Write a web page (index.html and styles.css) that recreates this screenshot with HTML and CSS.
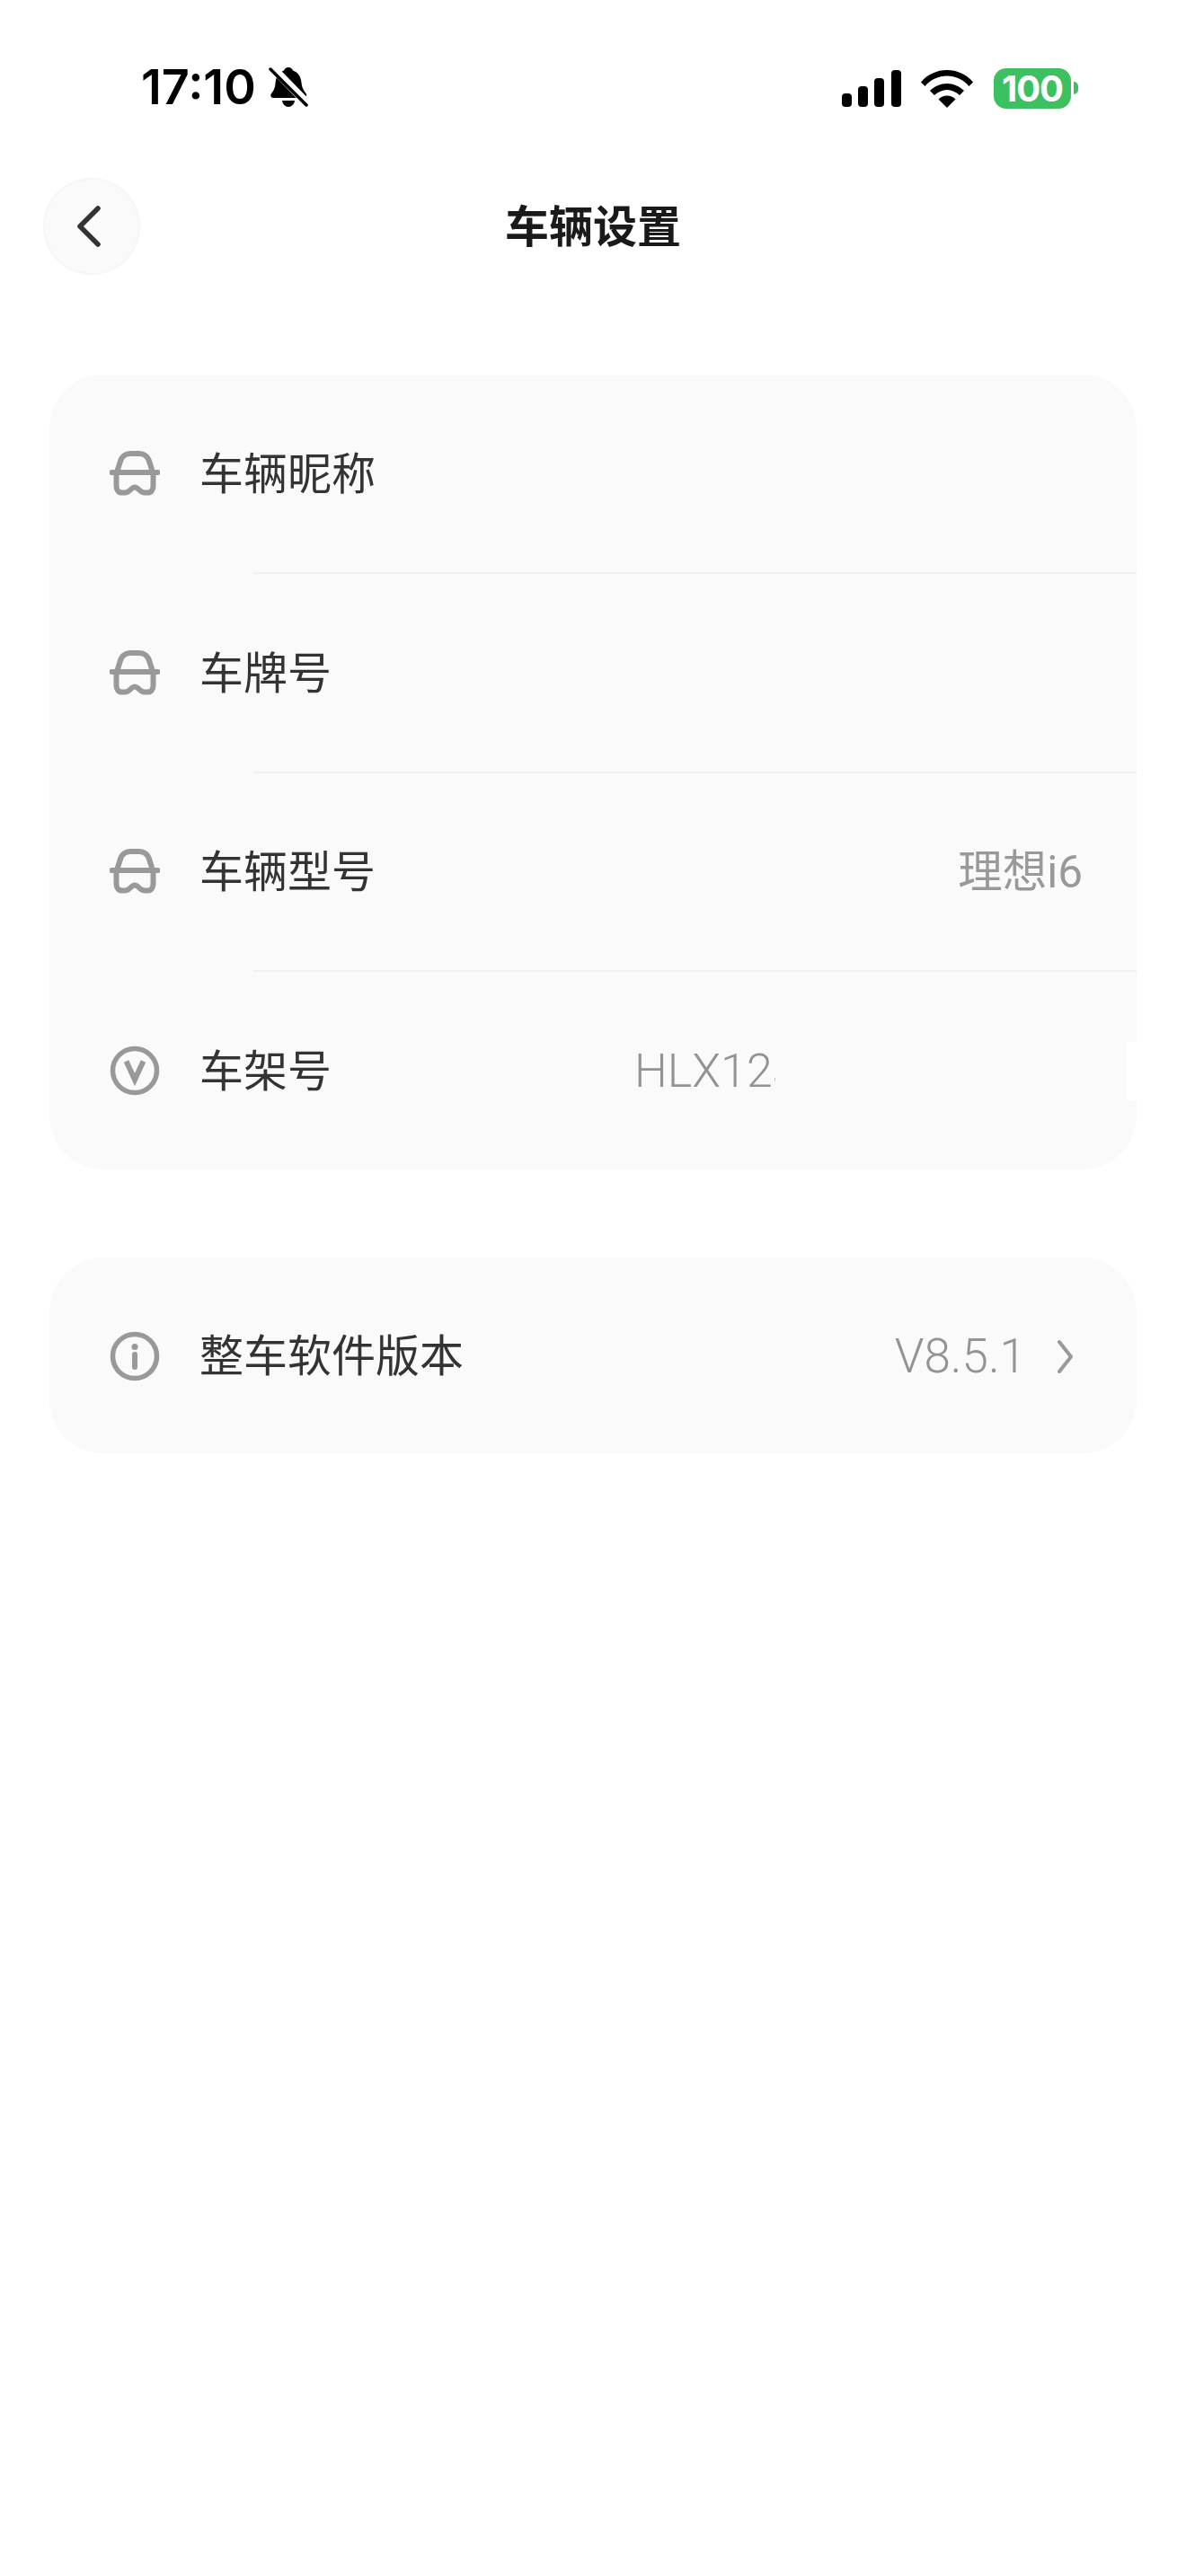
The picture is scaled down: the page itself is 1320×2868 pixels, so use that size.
FILE: index.html
```html
<!DOCTYPE html>
<html lang="zh">
<head>
<meta charset="utf-8">
<title>车辆设置</title>
<link rel="stylesheet" href="styles.css">
</head>
<body>
<div class="status">
  <div class="status-left">
    <span class="time">17:10</span>
    <svg class="bell" viewBox="0 0 44 46" width="44" height="46"><path d="M22 1c3 0 4.500 2 5 3.500C33 6.500 36 12 36.500 18c.4 5 2 8 5 12 1.500 2 .5 5-2 5H5c-2.500 0-3.500-3-2-5 3-3.500 4-6 4.500-11C8 12 11 6.500 17 4.500 17.500 3 19 1 22 1z" fill="#000"/><path d="M15 38h14c-.5 4-3.500 7-7 7s-6.500-3-7-7z" fill="#000"/><path d="M4 1l38 39" stroke="#fff" stroke-width="9"/><path d="M2 3l40 40" stroke="#000" stroke-width="3.500" stroke-linecap="round"/></svg>
  </div>
  <div class="status-right">
    <svg class="signal" viewBox="0 0 66 41" width="66" height="41"><rect x="0" y="26" width="11" height="15" rx="4"/><rect x="18" y="18" width="11" height="23" rx="4"/><rect x="36" y="9" width="11" height="32" rx="4"/><rect x="55" y="0" width="11" height="41" rx="4"/></svg>
    <svg class="wifi" viewBox="0 0 58 42" width="58" height="42"><path d="M0 13.500C7.500 4.500 18 0 29 0s21.500 4.500 29 13.500l-4.500 4.500C47 10.500 38.500 6.500 29 6.500S11 10.500 4.500 18z"/><path d="M10 23c5-5 12-8 19-8s14 3 19 8l-5 5c-4-3.500-9-6-14-6s-10 2.500-14 6z"/><path d="M19.500 32.500c2.500-2.500 6-4 9.500-4s7 1.500 9.500 4L29 42z"/></svg>
    <div class="battery"><span class="battery-body">100</span><span class="battery-nub"></span></div>
  </div>
</div>

<header class="nav">
  <button class="back" type="button" aria-label="返回">
    <svg viewBox="0 0 30 48" width="30" height="48"><path d="M24 4L4 24l20 20" fill="none" stroke="#333" stroke-width="5.500" stroke-linecap="round" stroke-linejoin="round"/></svg>
  </button>
  <h1 class="title">车辆设置</h1>
</header>

<main class="content">
  <section class="card card-main">
    <div class="row">
      <svg class="icon" viewBox="0 0 56 56"><path d="M8 27l3.500-11C13 9 18 6 23 6h10c5 0 10 3 11.500 10L48 27" fill="none" stroke="#999" stroke-width="6"/><path d="M7.500 27v15c0 5 2.500 7.500 6.500 7.500h3c3 0 4.500-1.500 6-3 1.500-1.500 3-3 5-3s3.500 1.500 5 3c1.500 1.500 3 3 6 3h3c4 0 6.500-2.500 6.500-7.500V27" fill="none" stroke="#999" stroke-width="6"/><path d="M2.500 27h51" stroke="#999" stroke-width="6" stroke-linecap="round"/></svg>
      <span class="label">车辆昵称</span>
    </div>
    <div class="divider"></div>
    <div class="row">
      <svg class="icon" viewBox="0 0 56 56"><path d="M8 27l3.500-11C13 9 18 6 23 6h10c5 0 10 3 11.500 10L48 27" fill="none" stroke="#999" stroke-width="6"/><path d="M7.500 27v15c0 5 2.500 7.500 6.500 7.500h3c3 0 4.500-1.500 6-3 1.500-1.500 3-3 5-3s3.500 1.500 5 3c1.500 1.500 3 3 6 3h3c4 0 6.500-2.500 6.500-7.500V27" fill="none" stroke="#999" stroke-width="6"/><path d="M2.500 27h51" stroke="#999" stroke-width="6" stroke-linecap="round"/></svg>
      <span class="label">车牌号</span>
    </div>
    <div class="divider"></div>
    <div class="row">
      <svg class="icon" viewBox="0 0 56 56"><path d="M8 27l3.500-11C13 9 18 6 23 6h10c5 0 10 3 11.500 10L48 27" fill="none" stroke="#999" stroke-width="6"/><path d="M7.500 27v15c0 5 2.500 7.500 6.500 7.500h3c3 0 4.500-1.500 6-3 1.500-1.500 3-3 5-3s3.500 1.500 5 3c1.500 1.500 3 3 6 3h3c4 0 6.500-2.500 6.500-7.500V27" fill="none" stroke="#999" stroke-width="6"/><path d="M2.500 27h51" stroke="#999" stroke-width="6" stroke-linecap="round"/></svg>
      <span class="label">车辆型号</span>
      <span class="value value-right">理想i6</span>
    </div>
    <div class="divider"></div>
    <div class="row">
      <svg class="icon" viewBox="0 0 56 56"><circle cx="28" cy="28" r="24.500" fill="none" stroke="#999" stroke-width="5.500"/><path d="M18.500 17.500L28 38l9.500-20.500" fill="none" stroke="#999" stroke-width="6"/></svg>
      <span class="label">车架号</span>
      <span class="value vin">HLX123456</span>
    </div>
    <span class="mask"></span>
  </section>

  <section class="card card-version">
    <div class="row">
      <svg class="icon icon-info" viewBox="0 0 56 56"><circle cx="28" cy="28" r="24.500" fill="none" stroke="#999" stroke-width="5.500"/><circle cx="28" cy="17.500" r="3.500" fill="#999"/><path d="M28 26v14" stroke="#999" stroke-width="6" stroke-linecap="round"/></svg>
      <span class="label">整车软件版本</span>
      <span class="value version">V8.5.1</span>
      <svg class="chevron" viewBox="0 0 19 39" width="19" height="39"><path d="M3 3l13 16.500L3 36" fill="none" stroke="#999" stroke-width="4" stroke-linecap="round" stroke-linejoin="round"/></svg>
    </div>
  </section>
</main>
</body>
</html>
```

FILE: styles.css
```css
* { box-sizing: border-box; }
html, body { margin: 0; padding: 0; background: #fff; }
body {
  width: 1320px;
  height: 2868px;
  overflow: hidden;
  font-family: "Noto Sans CJK SC", "Noto Sans", sans-serif;
}

.status {
  height: 198px;
  padding: 70px 120px 0 157px;
  display: flex;
  justify-content: space-between;
  align-items: flex-start;
}
.status-left { display: flex; align-items: center; gap: 14px; height: 54px; }
.time {
  font-family: Inter, sans-serif;
  font-weight: 600;
  font-size: 54px;
  line-height: 54px;
  color: #000;
}
.bell { display: block; }
.status-right { display: flex; align-items: center; height: 54px; }
.signal { display: block; fill: #000; margin-top: 3px; margin-right: 22px; }
.wifi { display: block; fill: #000; margin-top: 3px; margin-right: 23px; }
.battery { display: flex; align-items: center; gap: 3px; margin-top: 2px; }
.battery-body {
  width: 86px;
  height: 45px;
  border-radius: 14px;
  background: #3cc060;
  color: #fff;
  font-family: Inter, sans-serif;
  font-weight: 700;
  font-size: 40px;
  line-height: 45px;
  text-align: center;
  letter-spacing: -1px;
}
.battery-nub {
  width: 5px;
  height: 14px;
  background: #3cc060;
  border-radius: 0 7px 7px 0;
}

.nav {
  height: 108px;
  position: relative;
  display: flex;
  align-items: center;
  justify-content: center;
}
.back {
  position: absolute;
  left: 48px;
  top: 0;
  width: 108px;
  height: 108px;
  padding: 0 4px 0 0;
  border: 2px solid #f6f6f6;
  border-radius: 50%;
  background: #fafafa;
  display: flex;
  align-items: center;
  justify-content: center;
}
.title {
  margin: 0 0 6px;
  font-size: 49px;
  font-weight: 700;
  line-height: 60px;
  color: #1a1a1a;
}

.content { padding: 111px 55px 0; }
.card {
  position: relative;
  background: #fafafa;
  border-radius: 60px;
  display: flex;
  flex-direction: column;
}
.card-main { height: 885px; }
.card-version { height: 218px; margin-top: 98px; }
.row {
  flex: 1;
  display: flex;
  align-items: center;
  padding: 0 60px 0 67px;
}
.icon { width: 56px; height: 56px; flex: none; margin-right: 44px; }
.icon-info { margin-top: 2px; }
.label {
  font-size: 49px;
  line-height: 60px;
  margin-bottom: 6px;
  color: #333;
}
.divider {
  height: 2px;
  margin-left: 227px;
  background: #f0f0f0;
}
.value {
  font-family: Roboto, sans-serif;
  font-weight: 300;
  font-size: 53px;
  line-height: 60px;
  margin-top: 2px;
  color: #939393;
  white-space: nowrap;
}
.value-right {
  margin-left: auto;
  font-family: Roboto, "Noto Sans CJK SC", sans-serif;
  font-weight: 400;
  font-size: 49.5px;
  color: #999;
}
.vin {
  width: 157px;
  margin-left: 337px;
  font-size: 52px;
  overflow: hidden;
}
.version { margin-left: auto; padding-right: 34px; }
.chevron { display: block; flex: none; margin-right: 10px; margin-top: 2px; }
.mask {
  position: absolute;
  right: 0;
  top: 743px;
  width: 11px;
  height: 65px;
  background: #fff;
}
```
